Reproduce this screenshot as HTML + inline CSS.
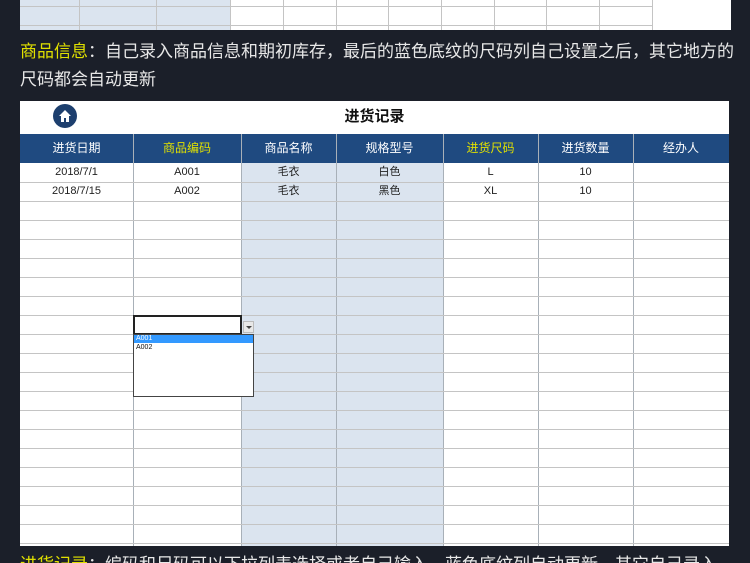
<!DOCTYPE html>
<html style="width:750px;height:563px;overflow:hidden"><head><meta charset="utf-8"><style>
*{margin:0;padding:0;box-sizing:border-box}
body{width:750px;height:563px;overflow:hidden;background:#1b1f29;position:relative;font-family:"Liberation Sans","Noto Sans CJK SC",sans-serif}
.abs{position:absolute}
.txt{color:#e8e8e8;font-size:17px;left:20px;letter-spacing:0;white-space:nowrap}
.y{color:#e0e000}
.v{position:absolute;width:1px;background:#c4c4c4}
.h{position:absolute;height:1px;background:#c4c4c4}
.hd{position:absolute;top:134px;height:29px;line-height:29px;text-align:center;color:#fff;font-size:12px}
.c{position:absolute;height:19px;line-height:19px;text-align:center;font-size:11px;color:#222}
</style></head><body>
<div class="abs" style="left:20px;top:0;width:711px;height:30px;background:#fff"></div>
<div class="abs" style="left:20px;top:0;width:210px;height:30px;background:#dbe4ef"></div>
<div class="h" style="left:20px;top:6px;width:632px"></div>
<div class="h" style="left:20px;top:25px;width:632px"></div>
<div class="v" style="left:79px;top:0;height:30px"></div>
<div class="v" style="left:156px;top:0;height:30px"></div>
<div class="v" style="left:230px;top:0;height:30px"></div>
<div class="v" style="left:283px;top:0;height:30px"></div>
<div class="v" style="left:336px;top:0;height:30px"></div>
<div class="v" style="left:388px;top:0;height:30px"></div>
<div class="v" style="left:441px;top:0;height:30px"></div>
<div class="v" style="left:494px;top:0;height:30px"></div>
<div class="v" style="left:546px;top:0;height:30px"></div>
<div class="v" style="left:599px;top:0;height:30px"></div>
<div class="v" style="left:652px;top:0;height:30px"></div>

<div class="abs txt" style="top:37px"><span class="y">商品信息</span>：自己录入商品信息和期初库存，最后的蓝色底纹的尺码列自己设置之后，其它地方的</div>
<div class="abs txt" style="top:65px">尺码都会自动更新</div>

<div class="abs" style="left:20px;top:101px;width:709px;height:445px;background:#fff"></div>
<div class="abs" style="left:241px;top:163px;width:202px;height:383px;background:#dbe4ef"></div>
<div class="abs" style="left:53px;top:104px;width:24px;height:24px;border-radius:50%;background:#1d3f6e"></div>
<svg class="abs" style="left:57px;top:108px" width="16" height="16" viewBox="0 0 16 16"><path d="M8 2L2 8h2v6h3v-4h2v4h3V8h2z" fill="#fff"/></svg>
<div class="abs" style="left:20px;top:104px;width:709px;text-align:center;font-size:15px;font-weight:bold;color:#111;line-height:26px">进货记录</div>
<div class="abs" style="left:20px;top:134px;width:709px;height:29px;background:#1f4a80"></div>
<div class="hd" style="left:20px;width:113px">进货日期</div>
<div class="hd" style="left:133px;width:108px;color:#e0e000">商品编码</div>
<div class="hd" style="left:241px;width:95px">商品名称</div>
<div class="hd" style="left:336px;width:107px">规格型号</div>
<div class="hd" style="left:443px;width:95px;color:#e0e000">进货尺码</div>
<div class="hd" style="left:538px;width:95px">进货数量</div>
<div class="hd" style="left:633px;width:96px">经办人</div>
<div class="v" style="left:133px;top:134px;height:412px;background:#a8b0b8"></div>
<div class="v" style="left:241px;top:134px;height:412px;background:#a8b0b8"></div>
<div class="v" style="left:336px;top:134px;height:412px;background:#a8b0b8"></div>
<div class="v" style="left:443px;top:134px;height:412px;background:#a8b0b8"></div>
<div class="v" style="left:538px;top:134px;height:412px;background:#a8b0b8"></div>
<div class="v" style="left:633px;top:134px;height:412px;background:#a8b0b8"></div>
<div class="c" style="left:20px;top:163px;width:113px">2018/7/1</div>
<div class="c" style="left:133px;top:163px;width:108px">A001</div>
<div class="c" style="left:241px;top:163px;width:95px">毛衣</div>
<div class="c" style="left:336px;top:163px;width:107px">白色</div>
<div class="c" style="left:443px;top:163px;width:95px">L</div>
<div class="c" style="left:538px;top:163px;width:95px">10</div>
<div class="c" style="left:20px;top:182px;width:113px">2018/7/15</div>
<div class="c" style="left:133px;top:182px;width:108px">A002</div>
<div class="c" style="left:241px;top:182px;width:95px">毛衣</div>
<div class="c" style="left:336px;top:182px;width:107px">黑色</div>
<div class="c" style="left:443px;top:182px;width:95px">XL</div>
<div class="c" style="left:538px;top:182px;width:95px">10</div>
<div class="h" style="left:20px;top:182px;width:709px"></div>
<div class="h" style="left:20px;top:201px;width:709px"></div>
<div class="h" style="left:20px;top:220px;width:709px"></div>
<div class="h" style="left:20px;top:239px;width:709px"></div>
<div class="h" style="left:20px;top:258px;width:709px"></div>
<div class="h" style="left:20px;top:277px;width:709px"></div>
<div class="h" style="left:20px;top:296px;width:709px"></div>
<div class="h" style="left:20px;top:315px;width:709px"></div>
<div class="h" style="left:20px;top:334px;width:709px"></div>
<div class="h" style="left:20px;top:353px;width:709px"></div>
<div class="h" style="left:20px;top:372px;width:709px"></div>
<div class="h" style="left:20px;top:391px;width:709px"></div>
<div class="h" style="left:20px;top:410px;width:709px"></div>
<div class="h" style="left:20px;top:429px;width:709px"></div>
<div class="h" style="left:20px;top:448px;width:709px"></div>
<div class="h" style="left:20px;top:467px;width:709px"></div>
<div class="h" style="left:20px;top:486px;width:709px"></div>
<div class="h" style="left:20px;top:505px;width:709px"></div>
<div class="h" style="left:20px;top:524px;width:709px"></div>
<div class="h" style="left:20px;top:543px;width:709px"></div>
<div class="abs" style="left:133px;top:315px;width:109px;height:20px;border:2px solid #222;background:#fff"></div>
<div class="abs" style="left:243px;top:321px;width:11px;height:12px;background:#e8e8e8;border:1px solid #bbb"></div>
<div class="abs" style="left:246px;top:326px;width:0;height:0;border-left:3px solid transparent;border-right:3px solid transparent;border-top:3px solid #444"></div>
<div class="abs" style="left:133px;top:334px;width:121px;height:63px;border:1px solid #444;background:#fff"></div>
<div class="abs" style="left:134px;top:335px;width:119px;height:8px;background:#3399ff;color:#fff;font-size:7px;line-height:8px;padding-left:2px">A001</div>
<div class="abs" style="left:134px;top:344px;width:119px;height:8px;color:#111;font-size:7px;line-height:8px;padding-left:2px">A002</div>

<div class="abs txt" style="top:550px"><span class="y">进货记录</span>：编码和尺码可以下拉列表选择或者自己输入，蓝色底纹列自动更新，其它自己录入</div>
</body></html>
